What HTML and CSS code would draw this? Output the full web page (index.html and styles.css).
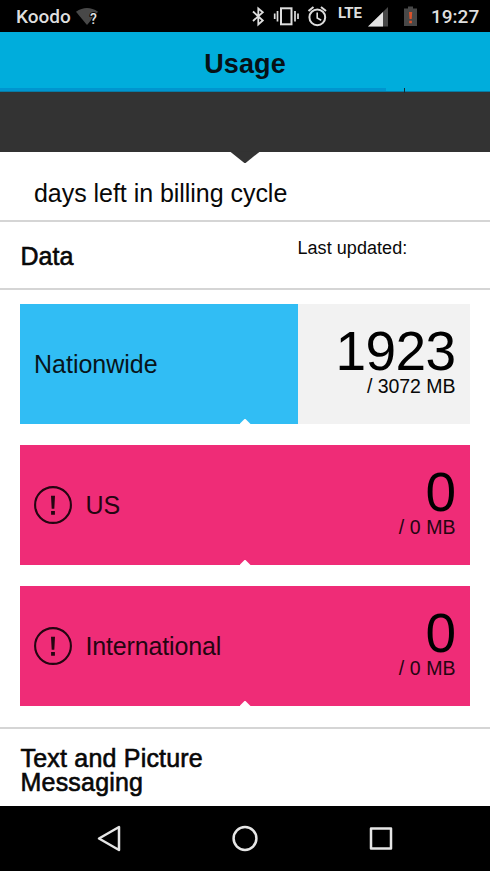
FILE: index.html
```
<!DOCTYPE html>
<html lang="en">
<head>
<meta charset="utf-8">
<title>Usage</title>
<link rel="stylesheet" href="styles.css">
</head>
<body>
<div class="status">
  <span class="carrier">Koodo</span>
  <svg class="wifi" width="24" height="20" viewBox="0 0 24 20"><path d="M0 4.800Q11-2.700 22 4.800L11 18Z" fill="#484848"/><text x="14" y="17" class="wifi-q">?</text></svg>
  <svg class="status-icons" width="170" height="32" viewBox="0 0 170 32" fill="none" stroke="#dedede">
    <path d="M3 11.500L12.800 20.500L8.300 24.500V8.500L12.800 12.200L3 21" stroke-width="1.800"/>
    <rect x="31" y="8.300" width="10.500" height="16" stroke-width="2"/>
    <path d="M27.500 11v10.500M24.700 13.500v5.500M45 11v10.500M48 13.500v5.500" stroke-width="1.700"/>
    <circle cx="67.300" cy="17.300" r="7.900" stroke-width="2"/>
    <path d="M67.200 12.500V18l4 2.200" stroke-width="1.600"/>
    <path d="M58.500 11l5-4M76 11l-5-4" stroke-width="2"/>
    <path d="M138 7V26.500H118Z" fill="#484848" stroke="none"/>
    <path d="M133 12V26.500H118Z" fill="#e4e4e4" stroke="none"/>
    <path d="M154 8.500h4V6.500h5v2h4V26H154Z" fill="#484848" stroke="none"/>
    <path d="M159 12h3.200l-.5 7h-2.200ZM159.200 20.800h2.700v2.400h-2.700Z" fill="#d9522b" stroke="none"/>
    <text x="88" y="17.500" class="lte" textLength="24">LTE</text>
  </svg>
  <span class="clock">19:27</span>
</div>
<header class="header"><h1>Usage</h1><i class="header-edge"></i><i class="header-tick"></i></header>
<div class="band"></div>
<section class="billing"><p>days left in billing cycle</p></section>
<section class="section-head"><h2>Data</h2><p>Last updated:</p></section>
<main class="cards">
  <article class="card nationwide">
    <span class="label">Nationwide</span>
    <div class="usage"><b>1923</b><span class="cap">/ 3072 MB</span></div>
  </article>
  <article class="card over">
    <svg class="alert" width="38" height="38" viewBox="0 0 38 38"><circle cx="19" cy="19" r="17.900" fill="none" stroke="#240511" stroke-width="2.100"/><path d="M17 9.800h4l-.7 13h-2.600ZM17.100 25h3.800v3.700h-3.800Z" fill="#240511"/></svg>
    <span class="label us">US</span>
    <div class="usage"><b>0</b><span class="cap zero">/ 0 MB</span></div>
  </article>
  <article class="card over">
    <svg class="alert" width="38" height="38" viewBox="0 0 38 38"><circle cx="19" cy="19" r="17.900" fill="none" stroke="#240511" stroke-width="2.100"/><path d="M17 9.800h4l-.7 13h-2.600ZM17.100 25h3.800v3.700h-3.800Z" fill="#240511"/></svg>
    <span class="label">International</span>
    <div class="usage"><b>0</b><span class="cap zero">/ 0 MB</span></div>
  </article>
</main>
<section class="messaging"><h2>Text and Picture<br>Messaging</h2></section>
<nav class="nav">
  <svg width="490" height="65" viewBox="0 0 490 65" fill="none" stroke="#e6e6e6" stroke-width="2.500" stroke-linejoin="round"><path d="M119 21V44L99 32.500Z"/><circle cx="245" cy="32.500" r="11.400"/><rect x="371" y="22.500" width="20" height="20"/></svg>
</nav>
</body>
</html>
```
FILE: styles.css
```
* { box-sizing: border-box; }
body { margin: 0; width: 490px; height: 871px; overflow: hidden; background: #fff; color: #080808; font-family: "Liberation Sans", Arial, sans-serif; }
h1, h2, p { margin: 0; }
.status { height: 32.4px; background: #000; display: flex; color: #dedede; font-family: Roboto, sans-serif; }
.carrier { width: 60px; margin-left: 16px; font-size: 19px; font-weight: 500; line-height: 34px; }
.wifi { margin-top: 7px; overflow: visible; }
.wifi-q { font: 500 14px Roboto, sans-serif; fill: #e4e4e4; stroke: #000; stroke-width: 2px; paint-order: stroke; }
.status-icons { margin-left: 150px; }
.lte { font: 700 15px Roboto, sans-serif; fill: #dedede; stroke: none; }
.clock { margin-left: 11px; font-size: 19px; font-weight: 500; line-height: 34px; white-space: nowrap; }
.header { position: relative; height: 60px; background: #00addc; border-bottom: 1px solid #087ca5; }
h1 { text-align: center; font-size: 27px; line-height: 64px; height: 59px; letter-spacing: .1px; color: #071116; }
.header-edge { position: absolute; left: 0; bottom: 0; width: 386px; height: 3px; background: #0095cf; }
.header-tick { position: absolute; z-index: 1; left: 404px; bottom: -2px; width: 1px; height: 5px; background: #182a30; }
.band { position: relative; height: 60px; background: #333; }
.band::after { content: ""; position: absolute; z-index: 1; left: 230px; top: 59px; width: 30px; height: 12px; background: #333; clip-path: polygon(0 0, 100% 0, 50% 100%); }
.billing { height: 69.2px; border-bottom: 2px solid #d5d5d5; padding-left: 34px; }
.billing p { font-size: 25px; line-height: 82px; height: 67px; letter-spacing: -.04px; }
.section-head { display: flex; height: 68px; border-bottom: 2px solid #d5d5d5; }
h2 { font-size: 25px; font-weight: 400; line-height: 24.5px; letter-spacing: .2px; -webkit-text-stroke: .6px #080808; }
.section-head h2 { width: 277px; margin: 22.5px 0 0 20.5px; letter-spacing: 0; }
.section-head p { font-size: 18px; line-height: 20px; margin-top: 16px; letter-spacing: .05px; }
.cards { display: flex; flex-direction: column; gap: 20.5px; padding: 14px 20px 20.5px; }
.card { position: relative; height: 120.5px; display: flex; align-items: center; padding: 0 14.6px 0 14px; }
.card::after { content: ""; position: absolute; left: 219.5px; bottom: 0; width: 11px; height: 5.5px; background: #fff; clip-path: polygon(50% 0, 100% 100%, 0 100%); }
.nationwide { background: linear-gradient(90deg, #31bdf4 278.5px, #f2f2f2 278.5px); }
.over { background: #ef2c77; }
.label { font-size: 25px; line-height: 30px; color: #08141a; }
.over .label { margin-left: 13.5px; letter-spacing: -.15px; color: #240511; }
.usage { margin-left: auto; padding-bottom: 3.6px; display: flex; flex-direction: column; align-items: flex-end; }
.usage b { font-weight: 400; font-size: 55px; line-height: 48px; letter-spacing: -.6px; color: #000; }
.cap { font-size: 19.5px; line-height: 23px; letter-spacing: -.05px; }
.over .cap { color: #240511; word-spacing: .3px; }
.messaging { border-top: 2px solid #d5d5d5; height: 79px; padding: 17px 20.5px 0; }
.nav { height: 66px; background: #000; }
.nav svg { display: block; }
```
